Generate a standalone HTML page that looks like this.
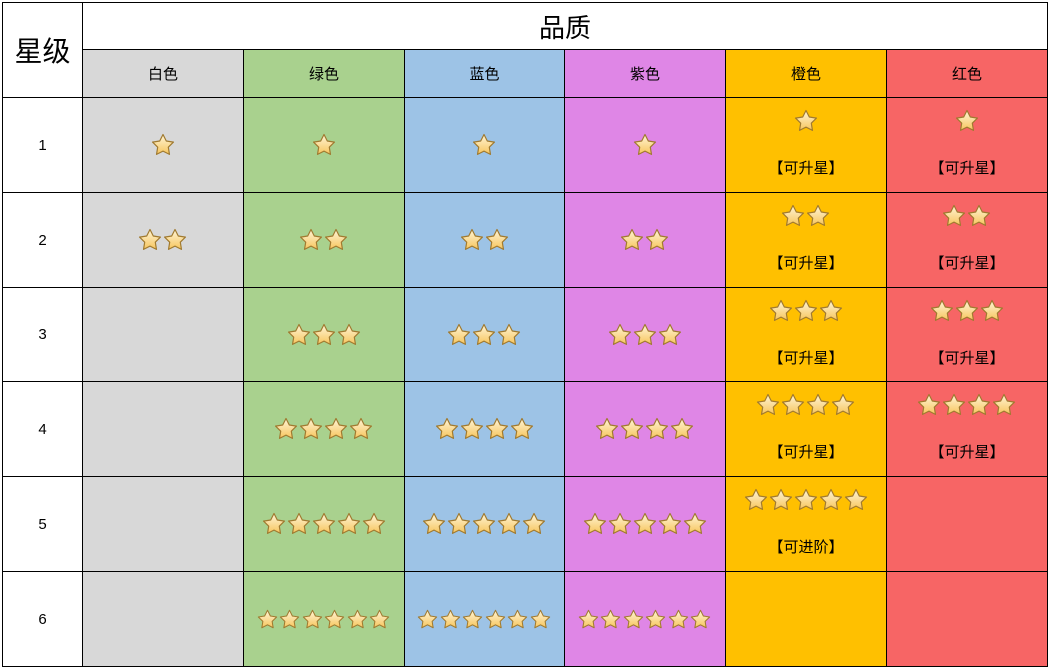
<!DOCTYPE html>
<html><head><meta charset="utf-8"><style>
body{margin:0;width:1049px;height:668px;background:#fff;position:relative;overflow:hidden;font-family:"Liberation Sans","Noto Sans CJK SC",sans-serif;}
.c{position:absolute;box-sizing:border-box;border:1px solid #000;font-size:15px;color:#000;}
.f{display:flex;align-items:center;justify-content:center;}
.st{position:absolute;left:-1px;right:0;display:flex;justify-content:center;top:35px;}
.tp{top:11px}
.s{width:24px;height:24px;margin:0 0.5px;}
.sm{top:37px}.sm .s{width:21px;height:21px;margin:0 0.8px;}
.t{position:absolute;left:0;right:0;text-align:center;font-size:15px;top:61px;line-height:20px}
.g{background:#d8d8d8}.gr{background:#a9d18e}.b{background:#9dc3e6}.p{background:#df86e6}.o{background:#ffc000}.r{background:#f76565}
.c1{left:82px;width:162px}.c2{left:243px;width:162px}.c3{left:404px;width:161px}.c4{left:564px;width:162px}.c5{left:725px;width:162px}.c6{left:886px;width:162px}
.r1{top:97px;height:96px}.r2{top:192px;height:96px}.r3{top:287px;height:95px}.r4{top:381px;height:96px}.r5{top:476px;height:96px}.r6{top:571px;height:96px}
.h{top:49px;height:49px}.k{left:2px;width:81px}
</style></head><body>
<svg width="0" height="0" style="position:absolute"><defs>
<linearGradient id="gd" x1="0" y1="0" x2="0" y2="1"><stop offset="0" stop-color="#fff5d8"/><stop offset="1" stop-color="#f7c55c"/></linearGradient>
<symbol id="st" viewBox="0 0 24 24"><path d="M12 1.5 L15.3 8 L22.46 9.1 L17.3 14.2 L18.47 21.4 L12 18.1 L5.53 21.4 L6.7 14.2 L1.54 9.1 L8.7 8Z" fill="url(#gd)" stroke="#a07a30" stroke-width="1.2" stroke-linejoin="round"/></symbol>
</defs></svg>
<div class="c f" style="left:2px;top:2px;width:81px;height:96px;font-size:28px">星级</div>
<div class="c f" style="left:82px;top:2px;width:966px;height:48px;font-size:26px">品质</div>
<div class="c f g c1 h">白色</div>
<div class="c f gr c2 h">绿色</div>
<div class="c f b c3 h">蓝色</div>
<div class="c f p c4 h">紫色</div>
<div class="c f o c5 h">橙色</div>
<div class="c f r c6 h">红色</div>
<div class="c f k r1">1</div>
<div class="c f k r2">2</div>
<div class="c f k r3">3</div>
<div class="c f k r4">4</div>
<div class="c f k r5">5</div>
<div class="c f k r6">6</div>

<div class="c g c1 r1"><div class="st"><svg class="s"><use href="#st"/></svg></div></div>
<div class="c g c1 r2"><div class="st"><svg class="s"><use href="#st"/></svg><svg class="s"><use href="#st"/></svg></div></div>
<div class="c g c1 r3"></div><div class="c g c1 r4"></div><div class="c g c1 r5"></div><div class="c g c1 r6"></div>

<div class="c gr c2 r1"><div class="st"><svg class="s"><use href="#st"/></svg></div></div>
<div class="c gr c2 r2"><div class="st"><svg class="s"><use href="#st"/></svg><svg class="s"><use href="#st"/></svg></div></div>
<div class="c gr c2 r3"><div class="st"><svg class="s"><use href="#st"/></svg><svg class="s"><use href="#st"/></svg><svg class="s"><use href="#st"/></svg></div></div>
<div class="c gr c2 r4"><div class="st"><svg class="s"><use href="#st"/></svg><svg class="s"><use href="#st"/></svg><svg class="s"><use href="#st"/></svg><svg class="s"><use href="#st"/></svg></div></div>
<div class="c gr c2 r5"><div class="st"><svg class="s"><use href="#st"/></svg><svg class="s"><use href="#st"/></svg><svg class="s"><use href="#st"/></svg><svg class="s"><use href="#st"/></svg><svg class="s"><use href="#st"/></svg></div></div>
<div class="c gr c2 r6"><div class="st sm"><svg class="s"><use href="#st"/></svg><svg class="s"><use href="#st"/></svg><svg class="s"><use href="#st"/></svg><svg class="s"><use href="#st"/></svg><svg class="s"><use href="#st"/></svg><svg class="s"><use href="#st"/></svg></div></div>

<div class="c b c3 r1"><div class="st"><svg class="s"><use href="#st"/></svg></div></div>
<div class="c b c3 r2"><div class="st"><svg class="s"><use href="#st"/></svg><svg class="s"><use href="#st"/></svg></div></div>
<div class="c b c3 r3"><div class="st"><svg class="s"><use href="#st"/></svg><svg class="s"><use href="#st"/></svg><svg class="s"><use href="#st"/></svg></div></div>
<div class="c b c3 r4"><div class="st"><svg class="s"><use href="#st"/></svg><svg class="s"><use href="#st"/></svg><svg class="s"><use href="#st"/></svg><svg class="s"><use href="#st"/></svg></div></div>
<div class="c b c3 r5"><div class="st"><svg class="s"><use href="#st"/></svg><svg class="s"><use href="#st"/></svg><svg class="s"><use href="#st"/></svg><svg class="s"><use href="#st"/></svg><svg class="s"><use href="#st"/></svg></div></div>
<div class="c b c3 r6"><div class="st sm"><svg class="s"><use href="#st"/></svg><svg class="s"><use href="#st"/></svg><svg class="s"><use href="#st"/></svg><svg class="s"><use href="#st"/></svg><svg class="s"><use href="#st"/></svg><svg class="s"><use href="#st"/></svg></div></div>

<div class="c p c4 r1"><div class="st"><svg class="s"><use href="#st"/></svg></div></div>
<div class="c p c4 r2"><div class="st"><svg class="s"><use href="#st"/></svg><svg class="s"><use href="#st"/></svg></div></div>
<div class="c p c4 r3"><div class="st"><svg class="s"><use href="#st"/></svg><svg class="s"><use href="#st"/></svg><svg class="s"><use href="#st"/></svg></div></div>
<div class="c p c4 r4"><div class="st"><svg class="s"><use href="#st"/></svg><svg class="s"><use href="#st"/></svg><svg class="s"><use href="#st"/></svg><svg class="s"><use href="#st"/></svg></div></div>
<div class="c p c4 r5"><div class="st"><svg class="s"><use href="#st"/></svg><svg class="s"><use href="#st"/></svg><svg class="s"><use href="#st"/></svg><svg class="s"><use href="#st"/></svg><svg class="s"><use href="#st"/></svg></div></div>
<div class="c p c4 r6"><div class="st sm"><svg class="s"><use href="#st"/></svg><svg class="s"><use href="#st"/></svg><svg class="s"><use href="#st"/></svg><svg class="s"><use href="#st"/></svg><svg class="s"><use href="#st"/></svg><svg class="s"><use href="#st"/></svg></div></div>

<div class="c o c5 r1"><div class="st tp"><svg class="s"><use href="#st"/></svg></div><div class="t">【可升星】</div></div>
<div class="c o c5 r2"><div class="st tp"><svg class="s"><use href="#st"/></svg><svg class="s"><use href="#st"/></svg></div><div class="t">【可升星】</div></div>
<div class="c o c5 r3"><div class="st tp"><svg class="s"><use href="#st"/></svg><svg class="s"><use href="#st"/></svg><svg class="s"><use href="#st"/></svg></div><div class="t">【可升星】</div></div>
<div class="c o c5 r4"><div class="st tp"><svg class="s"><use href="#st"/></svg><svg class="s"><use href="#st"/></svg><svg class="s"><use href="#st"/></svg><svg class="s"><use href="#st"/></svg></div><div class="t">【可升星】</div></div>
<div class="c o c5 r5"><div class="st tp"><svg class="s"><use href="#st"/></svg><svg class="s"><use href="#st"/></svg><svg class="s"><use href="#st"/></svg><svg class="s"><use href="#st"/></svg><svg class="s"><use href="#st"/></svg></div><div class="t">【可进阶】</div></div>
<div class="c o c5 r6"></div>

<div class="c r c6 r1"><div class="st tp"><svg class="s"><use href="#st"/></svg></div><div class="t">【可升星】</div></div>
<div class="c r c6 r2"><div class="st tp"><svg class="s"><use href="#st"/></svg><svg class="s"><use href="#st"/></svg></div><div class="t">【可升星】</div></div>
<div class="c r c6 r3"><div class="st tp"><svg class="s"><use href="#st"/></svg><svg class="s"><use href="#st"/></svg><svg class="s"><use href="#st"/></svg></div><div class="t">【可升星】</div></div>
<div class="c r c6 r4"><div class="st tp"><svg class="s"><use href="#st"/></svg><svg class="s"><use href="#st"/></svg><svg class="s"><use href="#st"/></svg><svg class="s"><use href="#st"/></svg></div><div class="t">【可升星】</div></div>
<div class="c r c6 r5"></div>
<div class="c r c6 r6"></div>
</body></html>
